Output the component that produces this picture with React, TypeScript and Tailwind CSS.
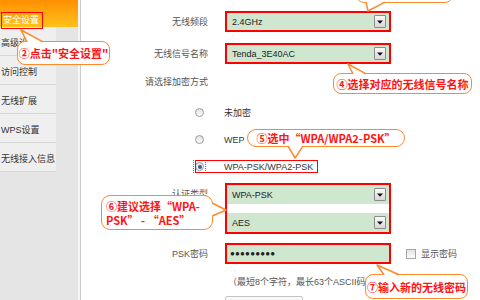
const menu = ["高级设置", "访问控制", "无线扩展", "WPS设置", "无线接入信息"];

function DropButton() {
  return (
    <span className="flex h-[13px] w-[12px] items-center justify-center rounded-[1px] border border-[#8c8c8c] bg-gradient-to-b from-[#fafafa] to-[#d6d6d6]">
      <svg width="6" height="4" viewBox="0 0 6 4">
        <path d="M0 0.5h6L3 3.8z" fill="#111" />
      </svg>
    </span>
  );
}

function Select({ value, className = "" }: { value: string; className?: string }) {
  return (
    <div className={"flex items-center justify-between bg-[#cfe7cf] pl-[5px] pr-[3px] text-[#222] " + className}>
      <span>{value}</span>
      <DropButton />
    </div>
  );
}

function Radio({ checked }: { checked?: boolean }) {
  return (
    <span className="flex h-[9px] w-[9px] items-center justify-center rounded-full border border-[#9a9a9a] bg-gradient-to-b from-[#e2e2e2] to-[#fbfbfb]">
      {checked && <span className="h-[4px] w-[4px] rounded-full bg-[#2f5f95]" />}
    </span>
  );
}

function Row({ label, children, className = "" }: { label: string; children: React.ReactNode; className?: string }) {
  return (
    <div className={"flex items-center " + className}>
      <div className="w-[127px] text-right text-[#555]">{label}</div>
      <div className="ml-[17px] w-[166px]">{children}</div>
    </div>
  );
}

function Callout({ className, children }: { className: string; children: React.ReactNode }) {
  return (
    <div
      className={
        "absolute flex items-center border-[1.5px] border-[#ff8a2b] bg-white font-['Noto_Sans_CJK_SC',sans-serif] text-[11px] font-bold leading-[14px] text-[#ff1414] " +
        className
      }
    >
      {children}
    </div>
  );
}

export default function App() {
  return (
    <div className="relative flex h-[300px] w-[480px] overflow-hidden bg-white font-['Liberation_Sans','Noto_Sans_CJK_SC',sans-serif] text-[9px] leading-[12px]">
      {/* left menu */}
      <aside className="flex w-[81px] shrink-0 flex-col border-r border-[#cccccc] bg-[#e5e5e5] shadow-[inset_-2px_0_0_#f6f6f6]">
        <div className="flex h-[27px] w-[78px] items-center bg-gradient-to-b from-[#ff8f00] to-[#ffc21a] pl-[3px] pt-[13px] text-white">
          安全设置
        </div>
        {menu.map((m) => (
          <div
            key={m}
            className="flex h-[29px] w-[56px] items-center border-b border-[#d6d6d6] bg-[#efefef] pl-[1px] pt-[3px] text-[#333]"
          >
            {m}
          </div>
        ))}
      </aside>

      {/* form */}
      <main className="flex-1 pt-[11px]">
        <Row label="无线频段">
          <Select value="2.4GHz" className="h-[21px] border-2 border-[#ff0000]" />
        </Row>
        <Row label="无线信号名称" className="mt-[11px]">
          <Select value="Tenda_3E40AC" className="h-[21px] border-2 border-[#ff0000]" />
        </Row>
        <div className="mt-[10px] flex h-[16px] items-center">
          <div className="w-[127px] text-right text-[#555]">请选择加密方式</div>
        </div>
        <div className="mt-[9px] text-[#333]">
          {[
            { t: "未加密", c: false },
            { t: "WEP", c: false },
            { t: "WPA-PSK/WPA2-PSK", c: true },
          ].map((r) => (
            <div key={r.t} className="flex h-[27px] items-center">
              <div className="flex w-[127px] justify-end pr-[2px]">
                <span className={r.c ? "flex p-[2px] outline-1 outline-dotted outline-[#777] -outline-offset-1" : "flex p-[2px]"}>
                  <Radio checked={r.c} />
                </span>
              </div>
              <span className="ml-[16px]">{r.t}</span>
            </div>
          ))}
        </div>
        <div className="mt-[3px] flex items-start">
          <div className="w-[127px] pt-[5px] text-right text-[#555]">认证类型</div>
          <div className="ml-[17px] flex h-[51px] w-[166px] flex-col justify-between border-2 border-[#ff0000] bg-white">
            <Select value="WPA-PSK" className="h-[19px]" />
            <Select value="AES" className="h-[19px]" />
          </div>
        </div>
        <Row label="PSK密码" className="mt-[9px]">
          <div className="flex items-center">
            <div className="flex h-[21px] w-[166px] shrink-0 items-center border-2 border-[#ff0000] bg-[#cfe7cf] pl-[3px] font-['Liberation_Sans',sans-serif] text-[8px] tracking-[0.2px] text-[#222]">
              ●●●●●●●●●
            </div>
            <span className="ml-[15px] h-[10px] w-[10px] shrink-0 border border-[#a5a5a5] bg-gradient-to-b from-[#e4e4e4] to-[#fcfcfc]" />
            <span className="ml-[5px] whitespace-nowrap text-[#555]">显示密码</span>
          </div>
        </Row>
        <div className="mt-[12px] whitespace-nowrap pl-[147px] text-[#555]">（最短8个字符，最长63个ASCII码或64个十六进制字符）</div>
        <div className="ml-[144px] mt-[8px] h-[20px] w-[78px] rounded-[2px] border border-[#c4c4c4] bg-gradient-to-b from-[#fbfbfb] to-[#e6e6e6]" />
      </main>

      {/* annotations */}
      <div className="absolute left-[1px] top-[12px] h-[17px] w-[42px] border-[1.5px] border-[#ff0000]" />
      <div className="absolute left-[195px] top-[160px] h-[13px] w-[123px] border border-[#ff0000]" />

      <Callout className="left-[356px] top-[-20px] h-[23px] w-[97px] rounded-[8px]">{""}</Callout>
      <Callout className="left-[17px] top-[41px] h-[24px] w-[93px] justify-center rounded-[8px]">②点击"安全设置"</Callout>
      <Callout className="left-[333px] top-[73px] h-[21px] w-[139px] justify-center rounded-[8px]">④选择对应的无线信号名称</Callout>
      <Callout className="left-[247px] top-[129px] h-[18px] w-[158px] justify-center rounded-full">⑤选中“WPA/WPA2-PSK”</Callout>
      <Callout className="left-[101px] top-[195px] h-[35px] w-[112px] rounded-[9px] pl-[4px]">
        <span>
          ⑥建议选择“WPA-
          <br />
          PSK” - “AES”
        </span>
      </Callout>
      <Callout className="left-[365px] top-[274px] h-[25px] w-[103px] justify-center rounded-[8px]">⑦输入新的无线密码</Callout>

      <svg className="pointer-events-none absolute inset-0" width="480" height="300" viewBox="0 0 480 300">
        <g fill="#fff" stroke="none">
          <path d="M366 1L368 11L385 1Z" />
          <path d="M27 43L21 30L43 43Z" />
          <path d="M353 75L348 64L366 75Z" />
          <path d="M288 145L295 158L303 145Z" />
          <path d="M211 203L226 210L211 216Z" />
          <path d="M384 276L377 265L399 276Z" />
        </g>
        <g fill="none" stroke="#ff8a2b" strokeWidth="1.5" strokeLinejoin="round">
          <path d="M366 2.2L368 11L385 2.2" />
          <path d="M27 41.8L21 30L43 41.8" />
          <path d="M353 73.8L348 64L366 73.8" />
          <path d="M288 146.2L295 158L303 146.2" />
          <path d="M212.2 203L226 210L212.2 216" />
          <path d="M384 274.8L377 265L399 274.8" />
        </g>
      </svg>
    </div>
  );
}
